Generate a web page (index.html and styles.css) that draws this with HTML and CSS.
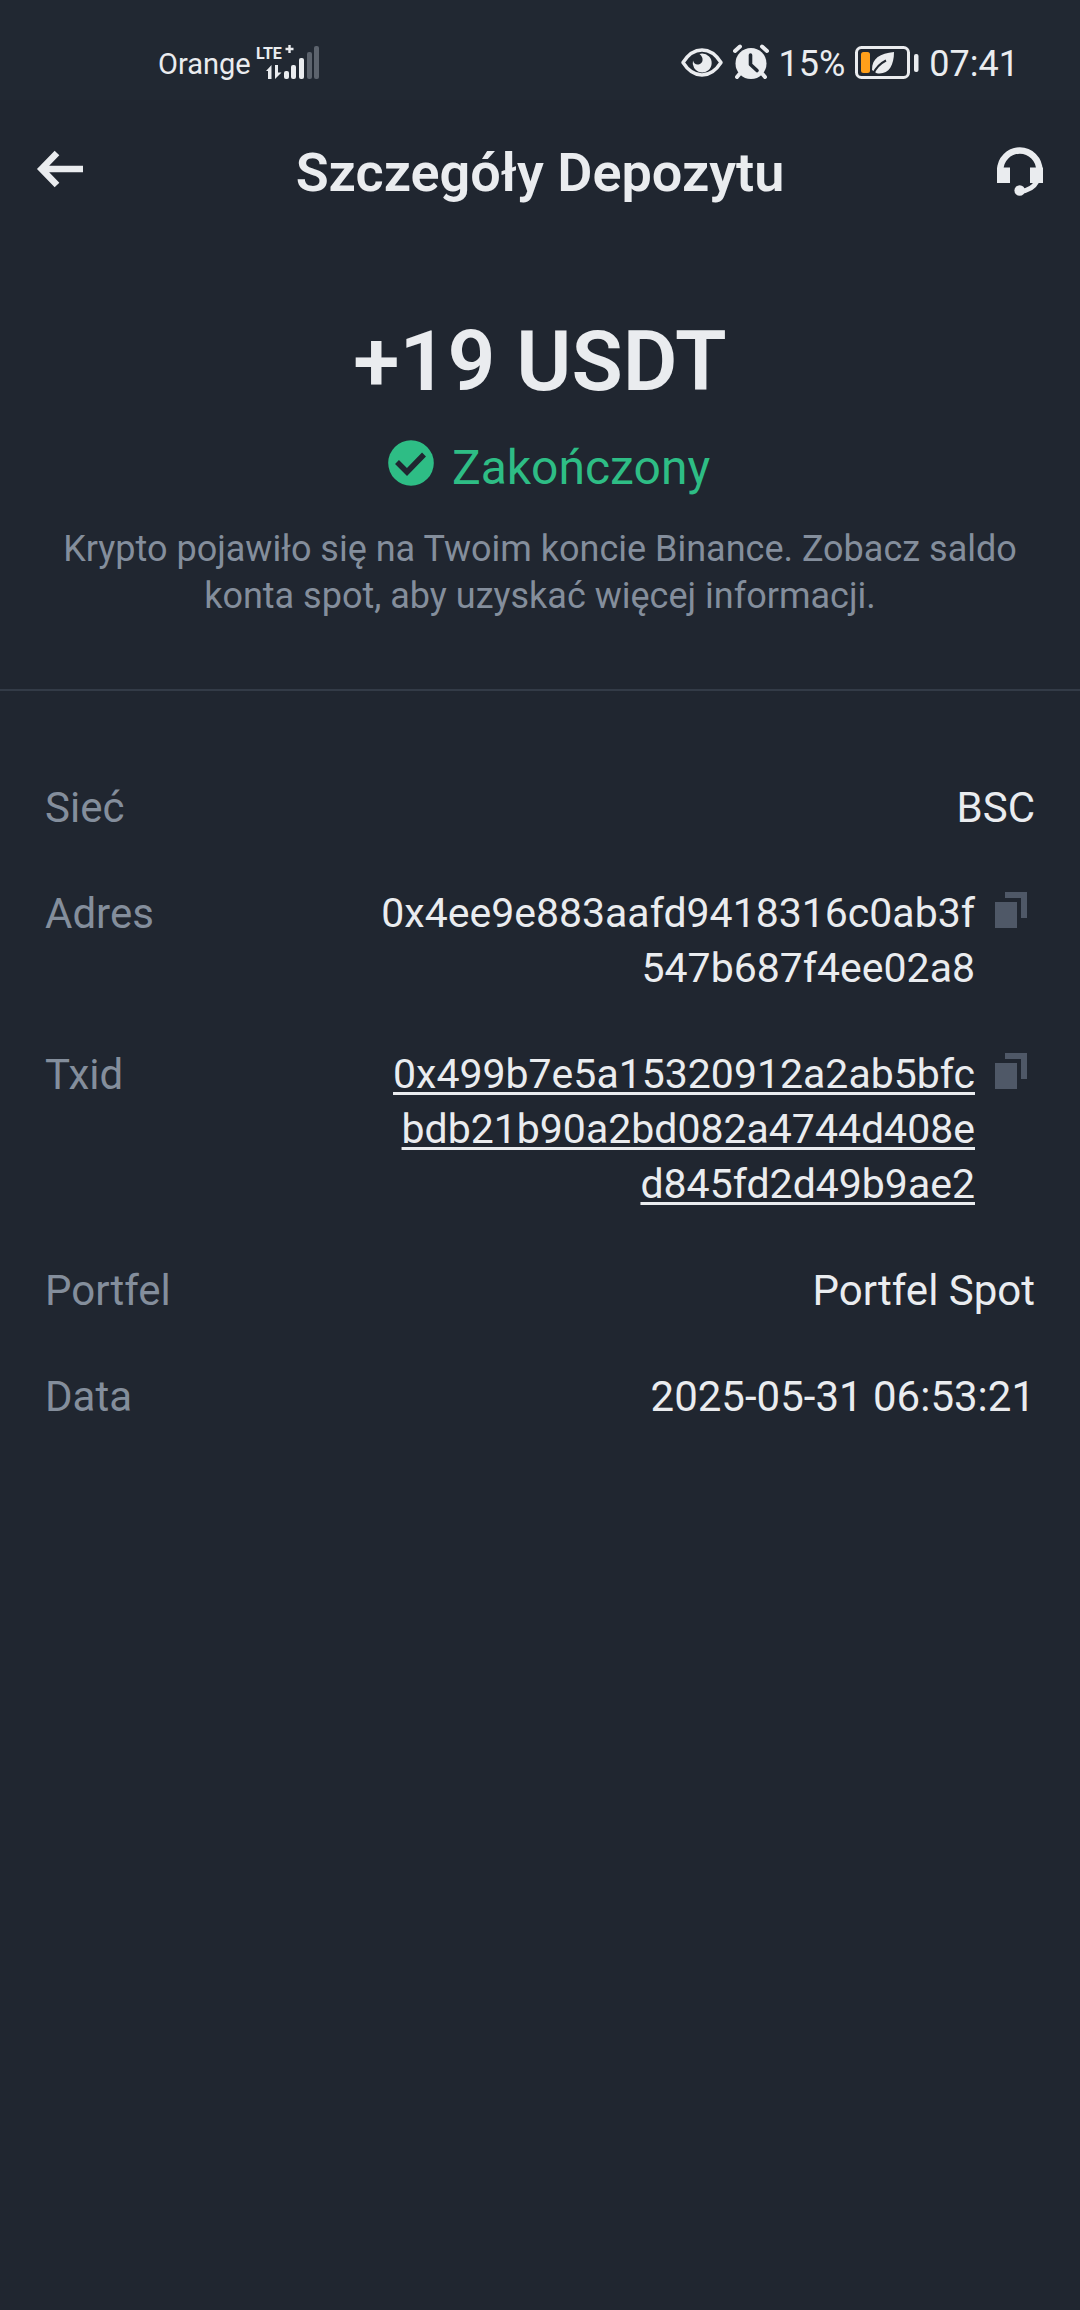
FILE: index.html
```html
<!DOCTYPE html>
<html lang="pl">

<head>
    <meta charset="UTF-8">
    <meta name="viewport" content="width=device-width, initial-scale=1.0">
    <title>Szczegóły Depozytu</title>
    <link rel="stylesheet" href="styles.css">
</head>

<body>
    <div class="statusbar">
        <div class="carrier">
            <span>Orange</span>
            <svg class="signal" width="64" height="36" viewBox="0 0 64 36">
                <text class="lte" x="0" y="15">LTE</text>
                <path d="M33.500 1v8M29.500 5h8" stroke="#eaecef" stroke-width="2.400" />
                <path d="M10 27l5.500-6v14h-3.500v-8zM19 21h3v7.500h3.500l-6.500 6.500z" fill="#eaecef" />
                <rect x="28" y="27" width="5" height="8" rx="2" fill="#eaecef" />
                <rect x="35" y="21" width="5" height="14" rx="2" fill="#eaecef" />
                <rect x="43" y="14" width="5" height="21" rx="2" fill="#eaecef" />
                <rect x="51" y="8" width="5" height="27" rx="2" fill="#5c636d" />
                <rect x="58" y="2" width="5" height="33" rx="2" fill="#5c636d" />
            </svg>
        </div>

        <div class="indicators">
            <svg width="42" height="36" viewBox="0 0 42 36">
                <path d="M2 18.500C8 9 14 6 21 6s13 3 19 12.500C34 28 28 31 21 31S8 28 2 18.500z" fill="none"
                    stroke="#eaecef" stroke-width="3.400" stroke-linejoin="round" />
                <path d="M21 9.500a9.500 9.500 0 1 1-9 7c.7 3 3 4.500 5.500 4 4.500-.8 6-6.500 1-10.500z" fill="#eaecef" />
            </svg>
            <svg width="36" height="36" viewBox="0 0 36 36">
                <circle cx="18" cy="19.500" r="15.500" fill="#eaecef" />
                <path d="M2 7l5-4.500M34 7l-5-4.500M6.500 30L4 33M29.500 30l2.500 3" stroke="#eaecef" stroke-width="4"
                    stroke-linecap="round" />
                <path d="M17.500 11v9.500l6.500 6" fill="none" stroke="#212832" stroke-width="3.600"
                    stroke-linecap="round" stroke-linejoin="round" />
            </svg>
            <span>15%</span>
            <svg width="64" height="36" viewBox="2 0 64 36">
                <rect x="3.500" y="3.500" width="52" height="30" rx="5" fill="none" stroke="#eaecef" stroke-width="3" />
                <rect x="8" y="8" width="9" height="21" rx="2.500" fill="#ff9f1a" />
                <rect x="61" y="10" width="4.500" height="18" rx="2" fill="#eaecef" />
                <path d="M19 26c0-12 8-16.500 22-18 0 13-5 21.500-14.500 21.500-2 0-3.500-.5-4.500-1.500z" fill="#eaecef" />
                <path d="M20 30c3-6.500 7-10.500 13-13.500" fill="none" stroke="#212832" stroke-width="2" />
            </svg>
            <time>07:41</time>
        </div>
    </div>

    <header class="header">
        <button class="icon-btn" type="button" aria-label="Wstecz">
            <svg width="72" height="56" viewBox="0 0 72 56">
                <path d="M51 24H12M25 8L9.500 24l15.500 16" fill="none" stroke="#eaecef" stroke-width="6.500" />
            </svg>
        </button>
        <h1>Szczegóły Depozytu</h1>
        <button class="icon-btn" type="button" aria-label="Pomoc">
            <svg width="72" height="56" viewBox="0 0 72 56">
                <path d="M24.300 25a19.500 19.500 0 0 1 39 0" fill="none" stroke="#eaecef" stroke-width="6.500" />
                <path d="M21 23v15h13V22.500H21zM54 22.500V38h13V22.500z" fill="#eaecef" />
                <path d="M60.500 37c-3 6-8 8.500-16.500 9.500" fill="none" stroke="#eaecef" stroke-width="5" />
                <circle cx="43.700" cy="45.500" r="5.300" fill="#eaecef" />
            </svg>
        </button>
    </header>

    <main>
        <section class="summary">
            <p class="amount">+19 USDT</p>
            <p class="status">
                <svg width="46" height="46" viewBox="0 0 46 46">
                    <circle cx="23" cy="23" r="22.800" fill="#2ebd85" />
                    <path d="M9 22l10 10 17-17.500" fill="none" stroke="#202630" stroke-width="5.500" />
                </svg>
                <span>Zakończony</span>
            </p>
            <p class="note">Krypto pojawiło się na Twoim koncie Binance. Zobacz saldo konta spot, aby uzyskać więcej informacji.</p>
        </section>

        <dl class="details">
            <div class="row">
                <dt>Sieć</dt>
                <dd>BSC</dd>
            </div>
            <div class="row">
                <dt>Adres</dt>
                <dd class="hash">0x4ee9e883aafd9418316c0ab3f<br>547b687f4ee02a8</dd>
                <dd class="copy">
                    <button class="icon-btn" type="button" aria-label="Kopiuj adres">
                        <svg width="40" height="55" viewBox="0 0 40 55">
                            <path d="M0 16h22v26H0zM10 6h22v26h-6V12H10z" fill="#4f5867" />
                        </svg>
                    </button>
                </dd>
            </div>
            <div class="row">
                <dt>Txid</dt>
                <dd class="hash"><a href="#">0x499b7e5a15320912a2ab5bfc<br>bdb21b90a2bd082a4744d408e<br>d845fd2d49b9ae2</a></dd>
                <dd class="copy">
                    <button class="icon-btn" type="button" aria-label="Kopiuj Txid">
                        <svg width="40" height="55" viewBox="0 0 40 55">
                            <path d="M0 16h22v26H0zM10 6h22v26h-6V12H10z" fill="#4f5867" />
                        </svg>
                    </button>
                </dd>
            </div>
            <div class="row">
                <dt>Portfel</dt>
                <dd>Portfel Spot</dd>
            </div>
            <div class="row">
                <dt>Data</dt>
                <dd>2025-05-31 06:53:21</dd>
            </div>
        </dl>
    </main>
</body>

</html>
```
FILE: styles.css
```css
:root {
    --bg: #202630;
    --bar: #212832;
    --text: #eaecef;
    --muted: #848e9c;
    --line: #333b47;
    --green: #2ebd85;
}

* {
    box-sizing: border-box;
}

body {
    margin: 0;
    min-height: 100vh;
    background: var(--bg);
    color: var(--text);
    font-family: Roboto, "Noto Sans", sans-serif;
}

h1,
p,
dl,
dd {
    margin: 0;
}

svg {
    display: block;
    flex: none;
}

/* status bar */
.statusbar {
    display: flex;
    justify-content: space-between;
    height: 100px;
    padding: 44px 61px 0 158px;
    background: var(--bar);
    line-height: 40px;
}

.carrier {
    display: flex;
    gap: 5px;
    font-size: 29px;
}

.lte {
    fill: var(--text);
    font-size: 16px;
    font-weight: 700;
}

.indicators {
    display: flex;
    gap: 10px;
    font-size: 36px;
}

/* header */
.header {
    display: flex;
    align-items: center;
    justify-content: space-between;
    height: 145px;
    padding: 0 32px;
}

.header h1 {
    font-size: 54px;
    font-weight: 600;
    line-height: 64px;
}

.icon-btn {
    padding: 0;
    border: none;
    background: none;
    cursor: pointer;
}

/* amount and status */
.summary {
    display: flex;
    flex-direction: column;
    gap: 30px;
    padding: 69px 48px;
    border-bottom: 2px solid var(--line);
    text-align: center;
}

.amount {
    font-size: 84px;
    font-weight: 600;
    line-height: 96px;
}

.status {
    display: flex;
    justify-content: center;
    gap: 18px;
    padding-left: 18px;
    color: var(--green);
    font-size: 48px;
    line-height: 56px;
}

.note {
    color: var(--muted);
    font-size: 36px;
    line-height: 47px;
}

/* details list */
.details {
    display: flex;
    flex-direction: column;
    gap: 51px;
    padding: 89px 45px;
    font-size: 42px;
    line-height: 55px;
}

.row {
    display: flex;
    gap: 20px;
}

.row dt {
    flex: 1;
    color: var(--muted);
}

.row dd {
    text-align: right;
}

.row .hash {
    font-size: 41px;
}

.row a {
    color: inherit;
    text-decoration-thickness: 3px;
    text-underline-offset: 4px;
    text-decoration-skip-ink: none;
}
```
